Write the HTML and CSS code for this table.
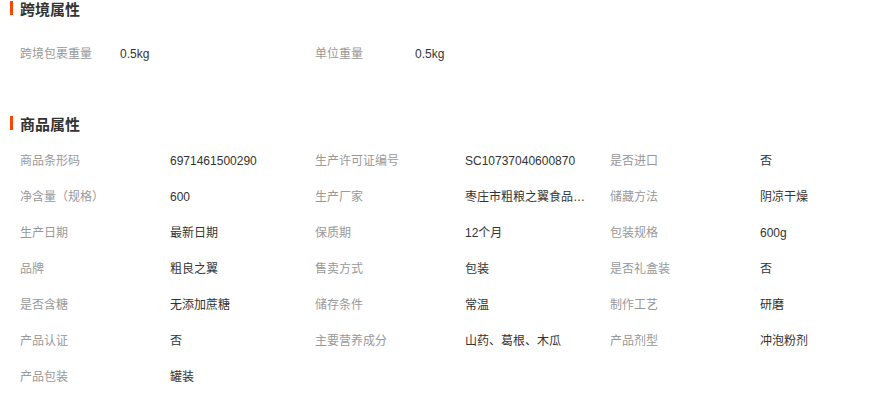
FILE: index.html
```html
<!DOCTYPE html>
<html lang="zh-CN">
<head>
<meta charset="utf-8">
<link rel="stylesheet" href="styles.css">
</head>
<body>
<div class="section">
  <div class="title">跨境属性</div>
  <div class="attrs attrs-cross">
    <div class="item"><span class="label">跨境包裹重量</span><span class="value">0.5kg</span></div>
    <div class="item"><span class="label">单位重量</span><span class="value">0.5kg</span></div>
  </div>
</div>
<div class="section section-product">
  <div class="title">商品属性</div>
  <div class="attrs attrs-product">
    <div class="item"><span class="label">商品条形码</span><span class="value">6971461500290</span></div>
    <div class="item"><span class="label">生产许可证编号</span><span class="value">SC10737040600870</span></div>
    <div class="item"><span class="label">是否进口</span><span class="value">否</span></div>
    <div class="item"><span class="label">净含量（规格）</span><span class="value">600</span></div>
    <div class="item"><span class="label">生产厂家</span><span class="value">枣庄市粗粮之翼食品有限公司</span></div>
    <div class="item"><span class="label">储藏方法</span><span class="value">阴凉干燥</span></div>
    <div class="item"><span class="label">生产日期</span><span class="value">最新日期</span></div>
    <div class="item"><span class="label">保质期</span><span class="value">12个月</span></div>
    <div class="item"><span class="label">包装规格</span><span class="value">600g</span></div>
    <div class="item"><span class="label">品牌</span><span class="value">粗良之翼</span></div>
    <div class="item"><span class="label">售卖方式</span><span class="value">包装</span></div>
    <div class="item"><span class="label">是否礼盒装</span><span class="value">否</span></div>
    <div class="item"><span class="label">是否含糖</span><span class="value">无添加蔗糖</span></div>
    <div class="item"><span class="label">储存条件</span><span class="value">常温</span></div>
    <div class="item"><span class="label">制作工艺</span><span class="value">研磨</span></div>
    <div class="item"><span class="label">产品认证</span><span class="value">否</span></div>
    <div class="item"><span class="label">主要营养成分</span><span class="value">山药、葛根、木瓜</span></div>
    <div class="item"><span class="label">产品剂型</span><span class="value">冲泡粉剂</span></div>
    <div class="item"><span class="label">产品包装</span><span class="value">罐装</span></div>
  </div>
</div>
</body>
</html>
```
FILE: styles.css
```css
html, body {
  margin: 0;
  padding: 0;
  background: #fff;
}
body {
  font-family: "Liberation Sans", "Noto Sans CJK SC", sans-serif;
  font-size: 12px;
  color: #333;
}
.title {
  display: flex;
  align-items: center;
  height: 16px;
  padding-left: 10px;
  font-size: 15px;
  font-weight: bold;
  color: #333;
}
.title::before {
  content: "";
  width: 3px;
  height: 14px;
  background: #ff4400;
  margin-right: 7px;
}
.attrs {
  display: grid;
  grid-template-columns: repeat(3, 295px);
  padding-left: 20px;
}
.attrs-cross {
  margin-top: 20px;
}
.section-product {
  margin-top: 43px;
}
.attrs-product {
  margin-top: 12px;
}
.item {
  display: flex;
  height: 36px;
  line-height: 36px;
  white-space: nowrap;
}
.label {
  color: #999;
  width: 150px;
  flex: none;
}
.attrs-cross .label {
  width: 100px;
}
.value {
  color: #333;
  width: 122px;
  overflow: hidden;
  text-overflow: ellipsis;
}
```
